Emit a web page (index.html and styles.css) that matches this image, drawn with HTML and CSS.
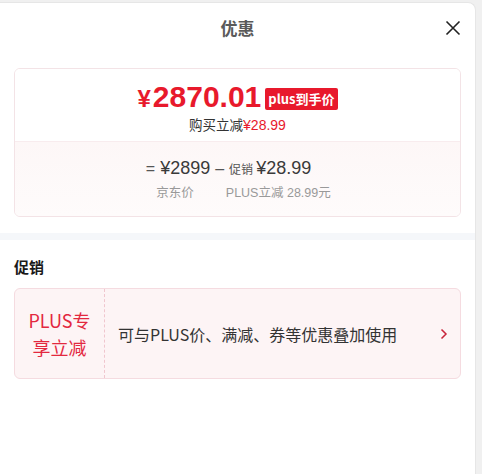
FILE: index.html
```html
<!DOCTYPE html>
<html lang="zh-CN">
<head>
    <meta charset="UTF-8">
    <meta name="viewport" content="width=device-width, initial-scale=1.0">
    <title>优惠</title>
    <link rel="stylesheet" href="styles.css">
</head>
<body>
    <div class="panel">
        <div class="header">
            <h1>优惠</h1>
            <span class="close">
                <svg width="16" height="16" viewBox="0 0 16 16"><path d="M1.5 1.5 L14.5 14.5 M14.5 1.5 L1.5 14.5" stroke="#222" stroke-width="1.6" fill="none"/></svg>
            </span>
        </div>

        <!-- preço final -->
        <div class="price-card">
            <div class="price-top">
                <div class="final">
                    <span class="yen">¥</span><span class="num">2870.01</span>
                    <span class="badge">plus到手价</span>
                </div>
                <div class="saving">购买立减<span class="red">¥28.99</span></div>
            </div>
            <div class="price-bottom">
                <div class="formula">
                    <span class="op">=</span>
                    <span>¥2899</span>
                    <span class="op">–</span>
                    <span class="small">促销</span>
                    <span>¥28.99</span>
                </div>
                <div class="labels">
                    <span class="lbl-jd">京东价</span>
                    <span class="lbl-plus">PLUS立减 28.99元</span>
                </div>
            </div>
        </div>

        <div class="band"></div>

        <h2>促销</h2>
        <div class="promo">
            <div class="promo-tag">PLUS专<br>享立减</div>
            <div class="promo-text">可与PLUS价、满减、券等优惠叠加使用</div>
            <span class="arrow">
                <svg width="8" height="12" viewBox="0 0 8 12"><path d="M1.5 1.5 L6 6 L1.5 10.5" stroke="#c8243a" stroke-width="1.5" fill="none"/></svg>
            </span>
        </div>
    </div>
</body>
</html>
```

FILE: styles.css
```css
body {
    margin: 0;
    padding: 2px 0 0 0;
    background-color: #f0f0f0;
    font-family: "Liberation Sans", "Noto Sans CJK SC", sans-serif;
    color: #333;
}

.panel {
    width: 476px;
    height: 472px;
    background-color: #fff;
    border-top-right-radius: 8px;
    border-right: 1px solid #e6e6e6;
    border-top: 1px solid #e6e6e6;
    box-sizing: border-box;
}

.header {
    height: 49px;
    display: flex;
    align-items: center;
    justify-content: center;
    position: relative;
}

h1 {
    margin: 0;
    font-size: 17px;
    font-weight: bold;
    color: #5a5a5a;
    font-family: "Noto Sans CJK SC", sans-serif;
}

.close {
    position: absolute;
    right: 14px;
    top: 17px;
    display: flex;
}

.price-card {
    margin: 16px 14px 0 14px;
    border: 1px solid #f3e3e6;
    border-radius: 6px;
    overflow: hidden;
}

.price-top {
    height: 72px;
    background-color: #fff;
    display: flex;
    flex-direction: column;
    align-items: center;
    border-bottom: 1px solid #f8ecee;
}

.final {
    display: flex;
    align-items: center;
    color: #e8192c;
    margin-top: 13px;
    height: 30px;
}

.yen {
    font-size: 24px;
    font-weight: bold;
    margin-right: 2px;
    margin-top: 4px;
    line-height: 26px;
}

.num {
    font-size: 30px;
    font-weight: bold;
    line-height: 30px;
}

.badge {
    background-color: #e8192c;
    color: #fff;
    font-size: 13px;
    font-weight: bold;
    padding: 2px 3px;
    border-radius: 2px;
    margin-left: 4px;
    margin-top: 4px;
    line-height: 18px;
    font-family: "Noto Sans CJK SC", sans-serif;
}

.saving {
    font-size: 13.5px;
    color: #333;
    margin-top: 4px;
    font-family: "Noto Sans CJK SC", sans-serif;
    line-height: 17px;
}

.red {
    color: #e8192c;
    font-family: "Liberation Sans", sans-serif;
    font-size: 14px;
}

.price-bottom {
    height: 74px;
    background: linear-gradient(#fdf7f7, #fefbfb);
    display: flex;
    flex-direction: column;
    align-items: center;
}

.formula {
    margin-top: 15px;
    font-size: 18px;
    color: #3a3a3a;
    line-height: 22px;
    display: flex;
    align-items: baseline;
    gap: 5px;
    margin-right: 18px;
}

.op {
    color: #555;
    font-size: 16px;
}

.small {
    font-size: 12px;
    color: #555;
    font-family: "Noto Sans CJK SC", sans-serif;
    margin-right: -2px;
}

.labels {
    margin-top: 2px;
    font-size: 12.5px;
    color: #999;
    display: flex;
    gap: 32px;
    margin-left: 12px;
}

.band {
    height: 7px;
    background-color: #f5f7fa;
    margin-top: 16px;
}

h2 {
    margin: 17px 0 0 14px;
    font-size: 15px;
    font-weight: bold;
    color: #1a1a1a;
    font-family: "Noto Sans CJK SC", sans-serif;
    line-height: 20px;
}

.promo {
    margin: 11px 14px 0 14px;
    height: 91px;
    border: 1px solid #f5dbe0;
    border-radius: 6px;
    background-color: #fdf4f5;
    display: flex;
    align-items: center;
    box-sizing: border-box;
}

.promo-tag {
    width: 89px;
    height: 100%;
    border-right: 1px dashed #f0c6ce;
    display: flex;
    align-items: center;
    justify-content: center;
    text-align: center;
    color: #e3283f;
    font-size: 18px;
    line-height: 27px;
    font-family: "Noto Sans CJK SC", sans-serif;
}

.promo-text {
    flex: 1;
    padding-left: 13px;
    font-size: 16px;
    color: #333;
    font-family: "Noto Sans CJK SC", sans-serif;
}

.arrow {
    display: flex;
    margin-right: 12px;
}
```
